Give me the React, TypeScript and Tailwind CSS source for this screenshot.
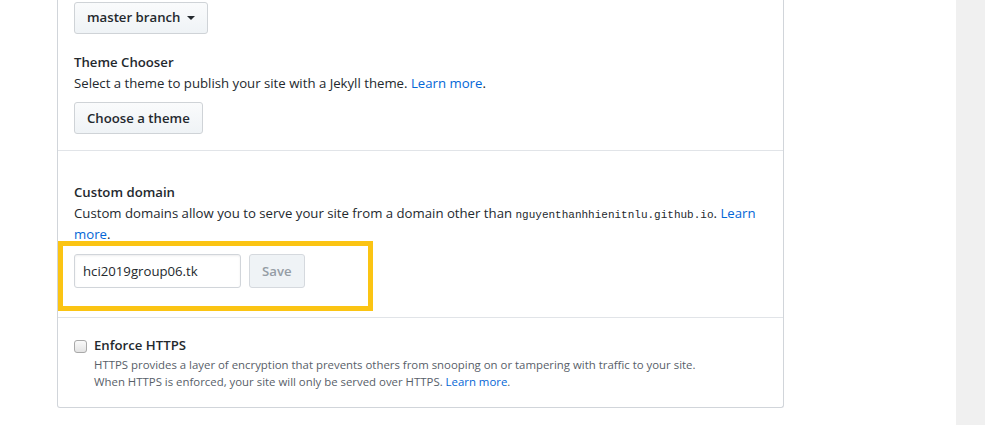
import React from "react";

const sans = "font-['Open_Sans',sans-serif]";

const Link = ({ children }: { children: React.ReactNode }) => (
  <a href="#" className="text-[#0366d6]">
    {children}
  </a>
);

const Btn = ({ children, disabled }: { children: React.ReactNode; disabled?: boolean }) => (
  <button
    type="button"
    className={`px-3 rounded-[3px] border text-[13.2px] font-semibold leading-5 ${
      disabled
        ? "h-[34px] border-[#d5d9de] bg-[#eff3f6] text-[#959da5]"
        : "h-[32px] border-[#cfd3d7] bg-gradient-to-b from-[#fafbfc] to-[#eff3f6] text-[#24292e]"
    }`}
  >
    {children}
  </button>
);

export default function App() {
  return (
    <div className={`flex w-[985px] h-[425px] bg-white overflow-hidden ${sans} text-[#24292e]`}>
      <div className="w-[956px] pl-[57px]">
        <div className="relative w-[727px] border-x border-b border-[#d1d5da] rounded-b-[3px]">
          {/* source */}
          <div className="px-4 pt-[2px] pb-4">
            <button
              type="button"
              className="h-[32px] px-3 flex items-center gap-[7px] rounded-[3px] border border-[#cfd3d7] bg-gradient-to-b from-[#fafbfc] to-[#eff3f6] text-[13.2px] font-semibold"
            >
              master branch
              <span className="w-0 h-0 border-x-4 border-x-transparent border-t-4 border-t-[#24292e]" />
            </button>
            <h4 className="mt-[18px] text-[13.2px] font-semibold leading-[21px]">Theme Chooser</h4>
            <p className="text-[13.2px] leading-[21px]">
              Select a theme to publish your site with a Jekyll theme. <Link>Learn more</Link>.
            </p>
            <div className="mt-2">
              <Btn>Choose a theme</Btn>
            </div>
          </div>

          {/* custom domain */}
          <div className="border-t border-[#e1e4e8] px-4 pt-[31px] pb-[29px]">
            <h4 className="text-[13.2px] font-semibold leading-[21px]">Custom domain</h4>
            <p className="text-[13.2px] leading-[21px]">
              Custom domains allow you to serve your site from a domain other than{" "}
              <code className="font-['Liberation_Mono',monospace] text-[11px] leading-none">nguyenthanhhienitnlu.github.io</code>.{" "}
              <Link>Learn</Link> <Link>more</Link>.
            </p>
            <div className="mt-[9px] flex gap-2">
              <input
                readOnly
                value="hci2019group06.tk"
                className="w-[167px] h-[34px] px-2 rounded-[3px] border border-[#d1d5da] text-[13.2px] text-[#24292e] outline-none shadow-[inset_0_1px_2px_rgba(27,31,35,0.075)]"
              />
              <Btn disabled>Save</Btn>
            </div>
            {/* highlight annotation */}
            <div className="absolute left-0 top-[241px] w-[315px] h-[70px] border-[5px] border-[#fbc413] pointer-events-none" />
          </div>

          {/* https */}
          <div className="border-t border-[#e1e4e8] px-4 pt-[17px] pb-[17px] flex gap-[7px]">
            <span className="mt-[5px] w-[13px] h-[13px] shrink-0 rounded-[3px] border border-[#a9a9a9] bg-gradient-to-b from-[#fafafa] to-[#e3e3e3]" />
            <div>
              <h4 className="text-[13.2px] font-semibold leading-[21px]">Enforce HTTPS</h4>
              <p className="text-[11.4px] leading-[17px] text-[#586069]">
                HTTPS provides a layer of encryption that prevents others from snooping on or tampering with traffic to your site.
                <br />
                When HTTPS is enforced, your site will only be served over HTTPS. <Link>Learn more</Link>.
              </p>
            </div>
          </div>
        </div>
      </div>
      <div className="flex-1 bg-[#f0f0f0]" />
    </div>
  );
}
